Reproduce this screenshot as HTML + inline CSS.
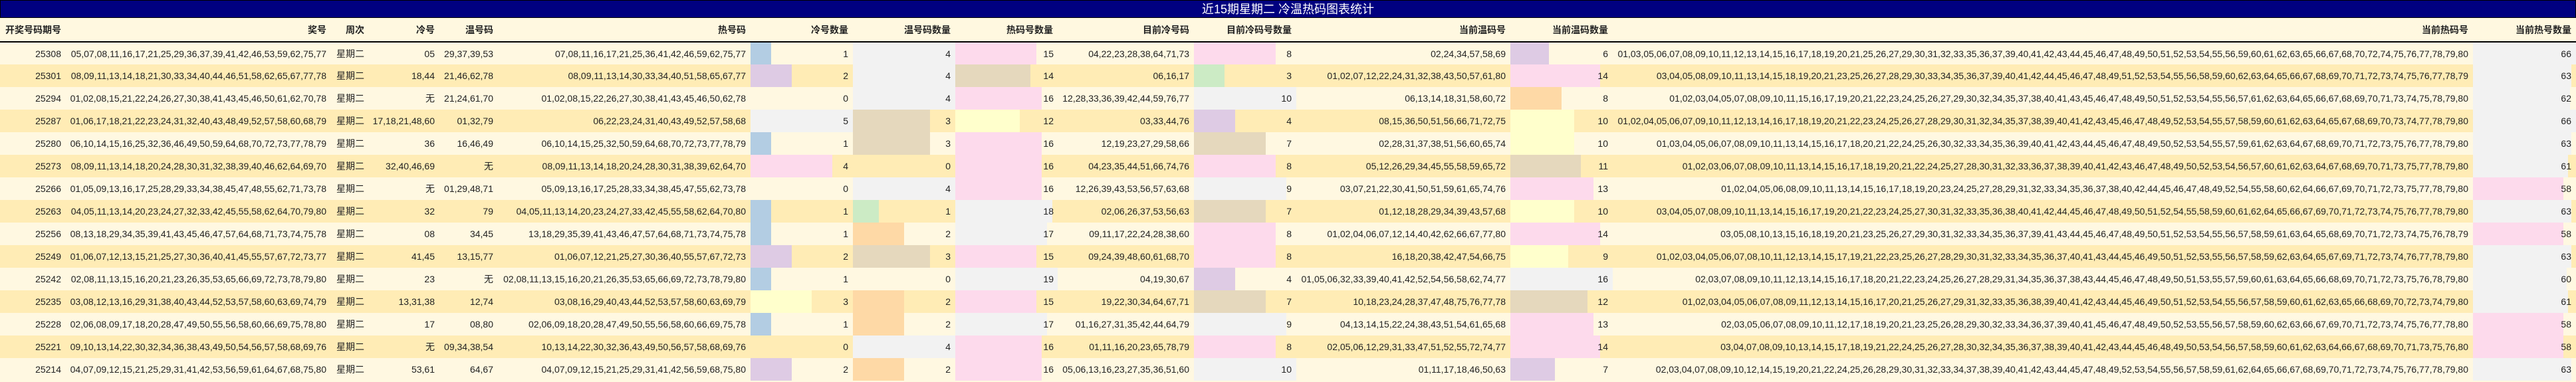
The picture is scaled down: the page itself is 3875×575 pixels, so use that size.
<!DOCTYPE html>
<html><head><meta charset="utf-8"><style>
*{margin:0;padding:0;box-sizing:border-box}
body{width:3875px;height:575px;overflow:hidden;background:#fff8e0;font-family:"Liberation Sans","Noto Sans CJK SC",sans-serif;font-size:14px;color:#222}
.t{height:27px;background:#000080;color:#fff;text-align:center;font-size:18px;line-height:27px;border:1px solid #000}
table{border-collapse:collapse;table-layout:fixed;width:3875px}
th{height:36px;background:#fff8e0;font-weight:bold;text-align:right;padding-right:7px;border-bottom:2px solid #000;white-space:nowrap;font-size:14px}
td{height:34px;text-align:right;padding-right:7px;white-space:nowrap;position:relative;overflow:visible}
tr.o td{background:#fff8e1}
tr.v td{background:#ffecb5}
i{position:absolute;left:0;top:0;bottom:0;display:block}
td span{position:relative}
.a{background:#b3cde3}.b{background:#decbe4}.c{background:#ffffcc}.d{background:#fddaec}.e{background:#f2f2f2}.f{background:#ccebc5}.g{background:#fed9a6}.h{background:#e5d8bd}
td.hc{padding-right:6px}
</style></head><body>
<div class="t">近15期星期二 冷温热码图表统计</div>
<table>
<colgroup><col style="width:99px"><col style="width:399px"><col style="width:57px"><col style="width:106px"><col style="width:88px"><col style="width:380px"><col style="width:154px"><col style="width:154px"><col style="width:154px"><col style="width:205px"><col style="width:154px"><col style="width:322px"><col style="width:154px"><col style="width:1294px"><col style="width:155px"></colgroup>
<tr><th>开奖号码期号</th><th>奖号</th><th>周次</th><th>冷号</th><th>温号码</th><th>热号码</th><th>冷号数量</th><th>温号码数量</th><th>热码号数量</th><th>目前冷号码</th><th>目前冷码号数量</th><th>当前温码号</th><th>当前温码数量</th><th>当前热码号</th><th>当前热号数量</th></tr>
<tr class="o"><td>25308</td><td>05,07,08,11,16,17,21,25,29,36,37,39,41,42,46,53,59,62,75,77</td><td>星期二</td><td>05</td><td>29,37,39,53</td><td>07,08,11,16,17,21,25,36,41,42,46,59,62,75,77</td><td><i class="a" style="width:31px"></i><span>1</span></td><td><i class="e" style="width:154px"></i><span>4</span></td><td class="hc"><i class="d" style="width:122px"></i><span>15</span></td><td>04,22,23,28,38,64,71,73</td><td><i class="d" style="width:123px"></i><span>8</span></td><td>02,24,34,57,58,69</td><td><i class="b" style="width:58px"></i><span>6</span></td><td>01,03,05,06,07,08,09,10,11,12,13,14,15,16,17,18,19,20,21,25,26,27,29,30,31,32,33,35,36,37,39,40,41,42,43,44,45,46,47,48,49,50,51,52,53,54,55,56,59,60,61,62,63,65,66,67,68,70,72,74,75,76,77,78,79,80</td><td><i class="e" style="width:155px"></i><span>66</span></td></tr>
<tr class="v"><td>25301</td><td>08,09,11,13,14,18,21,30,33,34,40,44,46,51,58,62,65,67,77,78</td><td>星期二</td><td>18,44</td><td>21,46,62,78</td><td>08,09,11,13,14,30,33,34,40,51,58,65,67,77</td><td><i class="b" style="width:62px"></i><span>2</span></td><td><i class="e" style="width:154px"></i><span>4</span></td><td class="hc"><i class="h" style="width:113px"></i><span>14</span></td><td>06,16,17</td><td><i class="f" style="width:46px"></i><span>3</span></td><td>01,02,07,12,22,24,31,32,38,43,50,57,61,80</td><td><i class="d" style="width:135px"></i><span>14</span></td><td>03,04,05,08,09,10,11,13,14,15,18,19,20,21,23,25,26,27,28,29,30,33,34,35,36,37,39,40,41,42,44,45,46,47,48,49,51,52,53,54,55,56,58,59,60,62,63,64,65,66,67,68,69,70,71,72,73,74,75,76,77,78,79</td><td><i class="e" style="width:148px"></i><span>63</span></td></tr>
<tr class="o"><td>25294</td><td>01,02,08,15,21,22,24,26,27,30,38,41,43,45,46,50,61,62,70,78</td><td>星期二</td><td>无</td><td>21,24,61,70</td><td>01,02,08,15,22,26,27,30,38,41,43,45,46,50,62,78</td><td><span>0</span></td><td><i class="e" style="width:154px"></i><span>4</span></td><td class="hc"><i class="d" style="width:130px"></i><span>16</span></td><td>12,28,33,36,39,42,44,59,76,77</td><td><i class="e" style="width:154px"></i><span>10</span></td><td>06,13,14,18,31,58,60,72</td><td><i class="g" style="width:77px"></i><span>8</span></td><td>01,02,03,04,05,07,08,09,10,11,15,16,17,19,20,21,22,23,24,25,26,27,29,30,32,34,35,37,38,40,41,43,45,46,47,48,49,50,51,52,53,54,55,56,57,61,62,63,64,65,66,67,68,69,70,71,73,74,75,78,79,80</td><td><i class="e" style="width:146px"></i><span>62</span></td></tr>
<tr class="v"><td>25287</td><td>01,06,17,18,21,22,23,24,31,32,40,43,48,49,52,57,58,60,68,79</td><td>星期二</td><td>17,18,21,48,60</td><td>01,32,79</td><td>06,22,23,24,31,40,43,49,52,57,58,68</td><td><i class="e" style="width:154px"></i><span>5</span></td><td><i class="h" style="width:116px"></i><span>3</span></td><td class="hc"><i class="c" style="width:97px"></i><span>12</span></td><td>03,33,44,76</td><td><i class="b" style="width:62px"></i><span>4</span></td><td>08,15,36,50,51,56,66,71,72,75</td><td><i class="c" style="width:96px"></i><span>10</span></td><td>01,02,04,05,06,07,09,10,11,12,13,14,16,17,18,19,20,21,22,23,24,25,26,27,28,29,30,31,32,34,35,37,38,39,40,41,42,43,45,46,47,48,49,52,53,54,55,57,58,59,60,61,62,63,64,65,67,68,69,70,73,74,77,78,79,80</td><td><i class="e" style="width:155px"></i><span>66</span></td></tr>
<tr class="o"><td>25280</td><td>06,10,14,15,16,25,32,36,46,49,50,59,64,68,70,72,73,77,78,79</td><td>星期二</td><td>36</td><td>16,46,49</td><td>06,10,14,15,25,32,50,59,64,68,70,72,73,77,78,79</td><td><i class="a" style="width:31px"></i><span>1</span></td><td><i class="h" style="width:116px"></i><span>3</span></td><td class="hc"><i class="d" style="width:130px"></i><span>16</span></td><td>12,19,23,27,29,58,66</td><td><i class="h" style="width:108px"></i><span>7</span></td><td>02,28,31,37,38,51,56,60,65,74</td><td><i class="c" style="width:96px"></i><span>10</span></td><td>01,03,04,05,06,07,08,09,10,11,13,14,15,16,17,18,20,21,22,24,25,26,30,32,33,34,35,36,39,40,41,42,43,44,45,46,47,48,49,50,52,53,54,55,57,59,61,62,63,64,67,68,69,70,71,72,73,75,76,77,78,79,80</td><td><i class="e" style="width:148px"></i><span>63</span></td></tr>
<tr class="v"><td>25273</td><td>08,09,11,13,14,18,20,24,28,30,31,32,38,39,40,46,62,64,69,70</td><td>星期二</td><td>32,40,46,69</td><td>无</td><td>08,09,11,13,14,18,20,24,28,30,31,38,39,62,64,70</td><td><i class="d" style="width:123px"></i><span>4</span></td><td><span>0</span></td><td class="hc"><i class="d" style="width:130px"></i><span>16</span></td><td>04,23,35,44,51,66,74,76</td><td><i class="d" style="width:123px"></i><span>8</span></td><td>05,12,26,29,34,45,55,58,59,65,72</td><td><i class="h" style="width:106px"></i><span>11</span></td><td>01,02,03,06,07,08,09,10,11,13,14,15,16,17,18,19,20,21,22,24,25,27,28,30,31,32,33,36,37,38,39,40,41,42,43,46,47,48,49,50,52,53,54,56,57,60,61,62,63,64,67,68,69,70,71,73,75,77,78,79,80</td><td><i class="e" style="width:143px"></i><span>61</span></td></tr>
<tr class="o"><td>25266</td><td>01,05,09,13,16,17,25,28,29,33,34,38,45,47,48,55,62,71,73,78</td><td>星期二</td><td>无</td><td>01,29,48,71</td><td>05,09,13,16,17,25,28,33,34,38,45,47,55,62,73,78</td><td><span>0</span></td><td><i class="e" style="width:154px"></i><span>4</span></td><td class="hc"><i class="d" style="width:130px"></i><span>16</span></td><td>12,26,39,43,53,56,57,63,68</td><td><i class="e" style="width:139px"></i><span>9</span></td><td>03,07,21,22,30,41,50,51,59,61,65,74,76</td><td><i class="d" style="width:125px"></i><span>13</span></td><td>01,02,04,05,06,08,09,10,11,13,14,15,16,17,18,19,20,23,24,25,27,28,29,31,32,33,34,35,36,37,38,40,42,44,45,46,47,48,49,52,54,55,58,60,62,64,66,67,69,70,71,72,73,75,77,78,79,80</td><td><i class="d" style="width:136px"></i><span>58</span></td></tr>
<tr class="v"><td>25263</td><td>04,05,11,13,14,20,23,24,27,32,33,42,45,55,58,62,64,70,79,80</td><td>星期二</td><td>32</td><td>79</td><td>04,05,11,13,14,20,23,24,27,33,42,45,55,58,62,64,70,80</td><td><i class="a" style="width:31px"></i><span>1</span></td><td><i class="f" style="width:39px"></i><span>1</span></td><td class="hc"><i class="e" style="width:146px"></i><span>18</span></td><td>02,06,26,37,53,56,63</td><td><i class="h" style="width:108px"></i><span>7</span></td><td>01,12,18,28,29,34,39,43,57,68</td><td><i class="c" style="width:96px"></i><span>10</span></td><td>03,04,05,07,08,09,10,11,13,14,15,16,17,19,20,21,22,23,24,25,27,30,31,32,33,35,36,38,40,41,42,44,45,46,47,48,49,50,51,52,54,55,58,59,60,61,62,64,65,66,67,69,70,71,72,73,74,75,76,77,78,79,80</td><td><i class="e" style="width:148px"></i><span>63</span></td></tr>
<tr class="o"><td>25256</td><td>08,13,18,29,34,35,39,41,43,45,46,47,57,64,68,71,73,74,75,78</td><td>星期二</td><td>08</td><td>34,45</td><td>13,18,29,35,39,41,43,46,47,57,64,68,71,73,74,75,78</td><td><i class="a" style="width:31px"></i><span>1</span></td><td><i class="g" style="width:77px"></i><span>2</span></td><td class="hc"><i class="e" style="width:138px"></i><span>17</span></td><td>09,11,17,22,24,28,38,60</td><td><i class="d" style="width:123px"></i><span>8</span></td><td>01,02,04,06,07,12,14,40,42,62,66,67,77,80</td><td><i class="d" style="width:135px"></i><span>14</span></td><td>03,05,08,10,13,15,16,18,19,20,21,23,25,26,27,29,30,31,32,33,34,35,36,37,39,41,43,44,45,46,47,48,49,50,51,52,53,54,55,56,57,58,59,61,63,64,65,68,69,70,71,72,73,74,75,76,78,79</td><td><i class="d" style="width:136px"></i><span>58</span></td></tr>
<tr class="v"><td>25249</td><td>01,06,07,12,13,15,21,25,27,30,36,40,41,45,55,57,67,72,73,77</td><td>星期二</td><td>41,45</td><td>13,15,77</td><td>01,06,07,12,21,25,27,30,36,40,55,57,67,72,73</td><td><i class="b" style="width:62px"></i><span>2</span></td><td><i class="h" style="width:116px"></i><span>3</span></td><td class="hc"><i class="d" style="width:122px"></i><span>15</span></td><td>09,24,39,48,60,61,68,70</td><td><i class="d" style="width:123px"></i><span>8</span></td><td>16,18,20,38,42,47,54,66,75</td><td><i class="c" style="width:87px"></i><span>9</span></td><td>01,02,03,04,05,06,07,08,10,11,12,13,14,15,17,19,21,22,23,25,26,27,28,29,30,31,32,33,34,35,36,37,40,41,43,44,45,46,49,50,51,52,53,55,56,57,58,59,62,63,64,65,67,69,71,72,73,74,76,77,78,79,80</td><td><i class="e" style="width:148px"></i><span>63</span></td></tr>
<tr class="o"><td>25242</td><td>02,08,11,13,15,16,20,21,23,26,35,53,65,66,69,72,73,78,79,80</td><td>星期二</td><td>23</td><td>无</td><td>02,08,11,13,15,16,20,21,26,35,53,65,66,69,72,73,78,79,80</td><td><i class="a" style="width:31px"></i><span>1</span></td><td><span>0</span></td><td class="hc"><i class="e" style="width:154px"></i><span>19</span></td><td>04,19,30,67</td><td><i class="b" style="width:62px"></i><span>4</span></td><td>01,05,06,32,33,39,40,41,42,52,54,56,58,62,74,77</td><td><i class="e" style="width:154px"></i><span>16</span></td><td>02,03,07,08,09,10,11,12,13,14,15,16,17,18,20,21,22,23,24,25,26,27,28,29,31,34,35,36,37,38,43,44,45,46,47,48,49,50,51,53,55,57,59,60,61,63,64,65,66,68,69,70,71,72,73,75,76,78,79,80</td><td><i class="e" style="width:141px"></i><span>60</span></td></tr>
<tr class="v"><td>25235</td><td>03,08,12,13,16,29,31,38,40,43,44,52,53,57,58,60,63,69,74,79</td><td>星期二</td><td>13,31,38</td><td>12,74</td><td>03,08,16,29,40,43,44,52,53,57,58,60,63,69,79</td><td><i class="c" style="width:92px"></i><span>3</span></td><td><i class="g" style="width:77px"></i><span>2</span></td><td class="hc"><i class="d" style="width:122px"></i><span>15</span></td><td>19,22,30,34,64,67,71</td><td><i class="h" style="width:108px"></i><span>7</span></td><td>10,18,23,24,28,37,47,48,75,76,77,78</td><td><i class="h" style="width:116px"></i><span>12</span></td><td>01,02,03,04,05,06,07,08,09,11,12,13,14,15,16,17,20,21,25,26,27,29,31,32,33,35,36,38,39,40,41,42,43,44,45,46,49,50,51,52,53,54,55,56,57,58,59,60,61,62,63,65,66,68,69,70,72,73,74,79,80</td><td><i class="e" style="width:143px"></i><span>61</span></td></tr>
<tr class="o"><td>25228</td><td>02,06,08,09,17,18,20,28,47,49,50,55,56,58,60,66,69,75,78,80</td><td>星期二</td><td>17</td><td>08,80</td><td>02,06,09,18,20,28,47,49,50,55,56,58,60,66,69,75,78</td><td><i class="a" style="width:31px"></i><span>1</span></td><td><i class="g" style="width:77px"></i><span>2</span></td><td class="hc"><i class="e" style="width:138px"></i><span>17</span></td><td>01,16,27,31,35,42,44,64,79</td><td><i class="e" style="width:139px"></i><span>9</span></td><td>04,13,14,15,22,24,38,43,51,54,61,65,68</td><td><i class="d" style="width:125px"></i><span>13</span></td><td>02,03,05,06,07,08,09,10,11,12,17,18,19,20,21,23,25,26,28,29,30,32,33,34,36,37,39,40,41,45,46,47,48,49,50,52,53,55,56,57,58,59,60,62,63,66,67,69,70,71,72,73,74,75,76,77,78,80</td><td><i class="d" style="width:136px"></i><span>58</span></td></tr>
<tr class="v"><td>25221</td><td>09,10,13,14,22,30,32,34,36,38,43,49,50,54,56,57,58,68,69,76</td><td>星期二</td><td>无</td><td>09,34,38,54</td><td>10,13,14,22,30,32,36,43,49,50,56,57,58,68,69,76</td><td><span>0</span></td><td><i class="e" style="width:154px"></i><span>4</span></td><td class="hc"><i class="d" style="width:130px"></i><span>16</span></td><td>01,11,16,20,23,65,78,79</td><td><i class="d" style="width:123px"></i><span>8</span></td><td>02,05,06,12,29,31,33,47,51,52,55,72,74,77</td><td><i class="d" style="width:135px"></i><span>14</span></td><td>03,04,07,08,09,10,13,14,15,17,18,19,21,22,24,25,26,27,28,30,32,34,35,36,37,38,39,40,41,42,43,44,45,46,48,49,50,53,54,56,57,58,59,60,61,62,63,64,66,67,68,69,70,71,73,75,76,80</td><td><i class="d" style="width:136px"></i><span>58</span></td></tr>
<tr class="o"><td>25214</td><td>04,07,09,12,15,21,25,29,31,41,42,53,56,59,61,64,67,68,75,80</td><td>星期二</td><td>53,61</td><td>64,67</td><td>04,07,09,12,15,21,25,29,31,41,42,56,59,68,75,80</td><td><i class="b" style="width:62px"></i><span>2</span></td><td><i class="g" style="width:77px"></i><span>2</span></td><td class="hc"><i class="d" style="width:130px"></i><span>16</span></td><td>05,06,13,16,23,27,35,36,51,60</td><td><i class="e" style="width:154px"></i><span>10</span></td><td>01,11,17,18,46,50,63</td><td><i class="b" style="width:67px"></i><span>7</span></td><td>02,03,04,07,08,09,10,12,14,15,19,20,21,22,24,25,26,28,29,30,31,32,33,34,37,38,39,40,41,42,43,44,45,47,48,49,52,53,54,55,56,57,58,59,61,62,64,65,66,67,68,69,70,71,72,73,74,75,76,77,78,79,80</td><td><i class="e" style="width:148px"></i><span>63</span></td></tr>
</table>
</body></html>
